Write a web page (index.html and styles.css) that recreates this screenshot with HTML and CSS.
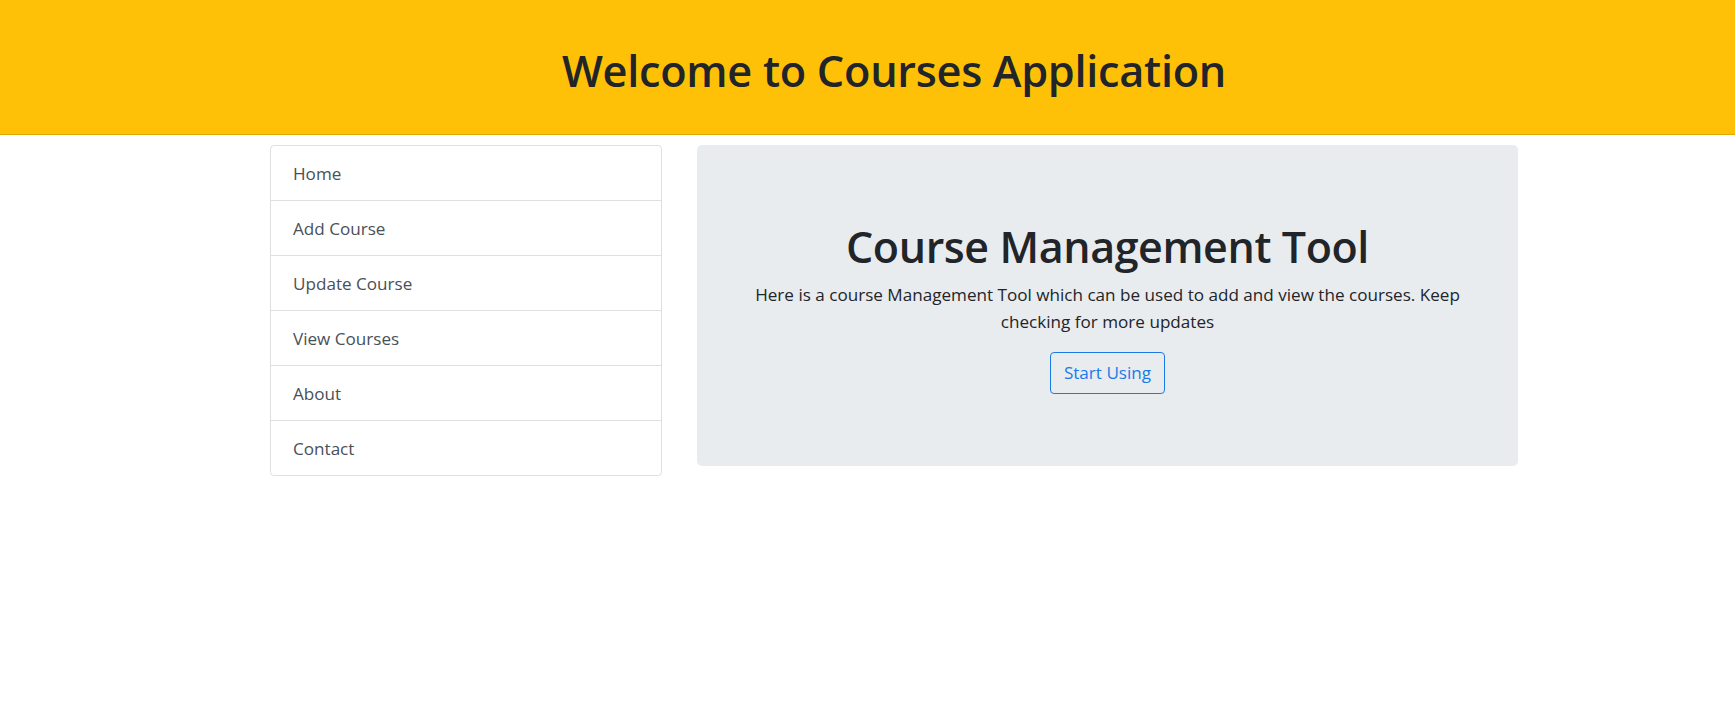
FILE: index.html
```html
<!DOCTYPE html>
<html>
<head>
<meta charset="utf-8">
<title>Courses Application</title>
<link rel="stylesheet" href="styles.css">
</head>
<body>
<div class="page">
  <header class="banner">
    <h1 class="banner-title">Welcome to Courses Application</h1>
  </header>
  <div class="container">
    <nav class="menu">
      <a class="menu-item" href="#">Home</a>
      <a class="menu-item" href="#">Add Course</a>
      <a class="menu-item" href="#">Update Course</a>
      <a class="menu-item" href="#">View Courses</a>
      <a class="menu-item" href="#">About</a>
      <a class="menu-item" href="#">Contact</a>
    </nav>
    <main class="jumbo">
      <h1 class="jumbo-title">Course Management Tool</h1>
      <p class="jumbo-text">Here is a course Management Tool which can be used to add and view the courses. Keep checking for more updates</p>
      <button class="btn-outline">Start Using</button>
    </main>
  </div>
</div>
</body>
</html>
```

FILE: styles.css
```css
html, body {
  margin: 0;
  padding: 0;
  overflow: hidden;
  background: #fff;
}
body {
  font-family: "Open Sans", "Noto Sans", sans-serif;
  color: #212529;
}
.page {
  width: 1788px;
}
.banner {
  background: #ffc107;
  height: 134px;
  border-bottom: 1px solid #e0a800;
  display: flex;
  align-items: center;
  justify-content: center;
}
.banner-title {
  margin: 6px 0 0;
  font-size: 43.3px;
  font-weight: 600;
  letter-spacing: -0.3px;
  color: #212529;
}
.container {
  width: 1248px;
  margin: 10px auto 0;
  display: flex;
  align-items: flex-start;
  gap: 35px;
}
.menu {
  width: 392px;
  box-sizing: border-box;
  flex: none;
  border: 1px solid rgba(0,0,0,.125);
  border-radius: 4px;
  display: flex;
  flex-direction: column;
}
.menu-item {
  height: 54px;
  padding: 0 22px;
  display: flex;
  align-items: center;
  font-size: 17.1px;
  color: #495057;
  text-decoration: none;
  border-top: 1px solid rgba(0,0,0,.125);
}
.menu-item:first-child {
  border-top: none;
}
.jumbo {
  width: 821px;
  height: 321px;
  box-sizing: border-box;
  background: #e9ecef;
  border-radius: 5px;
  padding: 75px 35px 0;
  display: flex;
  flex-direction: column;
  align-items: center;
  text-align: center;
}
.jumbo-title {
  margin: 0 0 8px;
  font-size: 43px;
  font-weight: 600;
  line-height: 53px;
  letter-spacing: -0.4px;
}
.jumbo-text {
  margin: 0 0 17px;
  font-size: 17.1px;
  line-height: 27px;
}
.btn-outline {
  font-family: inherit;
  font-size: 17.1px;
  line-height: 26px;
  color: #1a7ae8;
  background: transparent;
  border: 1px solid #1a7ae8;
  border-radius: 4px;
  padding: 7px 10px;
  width: 115px;
}
```
